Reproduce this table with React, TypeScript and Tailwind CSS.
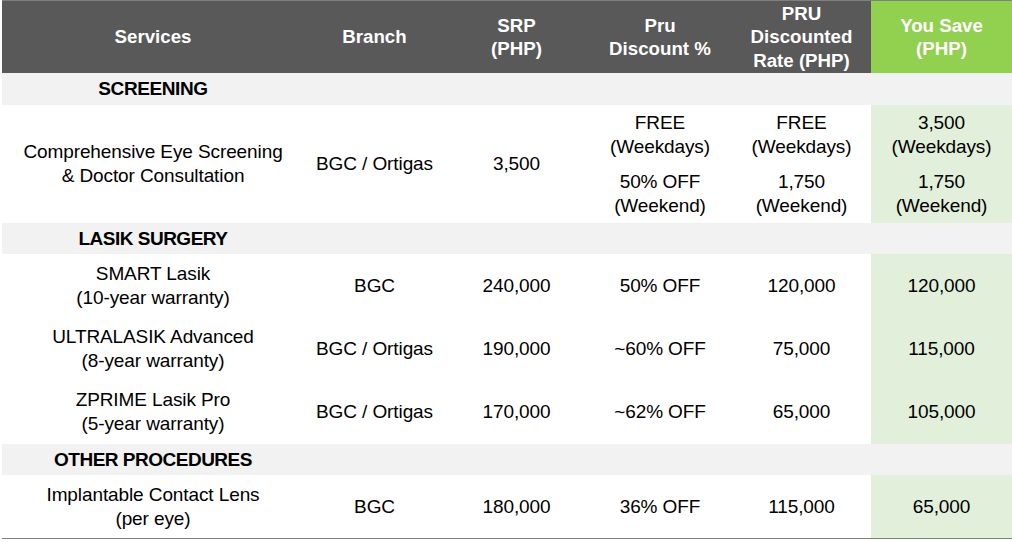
import React from "react";

const COLS = "grid grid-cols-[302px_141px_143px_144px_139px_141px]";

function Cell({ children, green = false }: { children?: React.ReactNode; green?: boolean }) {
  return (
    <div
      className={`flex flex-col items-center justify-center text-center ${green ? "bg-[#e2efda]" : ""}`}
    >
      {children}
    </div>
  );
}

function Category({ label }: { label: string }) {
  return (
    <div className={`${COLS} h-[31px] bg-[#f2f2f2]`}>
      <div className="flex items-center justify-center font-bold tracking-[-0.5px]">{label}</div>
    </div>
  );
}

function Two({ a, b }: { a: string; b: string }) {
  return (
    <>
      <div>{a}</div>
      <div>{b}</div>
    </>
  );
}

function DataRow({
  h,
  cells,
}: {
  h: string;
  cells: React.ReactNode[];
}) {
  return (
    <div className={`${COLS} ${h}`}>
      {cells.map((c, i) => (
        <Cell key={i} green={i === 5}>
          {c}
        </Cell>
      ))}
    </div>
  );
}

export default function App() {
  return (
    <div
      className="w-[1012px] h-[542px] bg-white text-black text-[19px] leading-[24px] tracking-[-0.1px]"
      style={{ fontFamily: '"Liberation Sans", Arial, sans-serif' }}
    >
      <div className="ml-[2px] w-[1010px] border-b border-[#7f7f7f]">
        {/* Header */}
        <div className={`${COLS} h-[73px] border-t border-[#7f7f7f] bg-[#595959] text-white font-bold leading-[23.5px] tracking-normal text-[18.7px]`}>
          <Cell>Services</Cell>
          <Cell>Branch</Cell>
          <Cell>
            <Two a="SRP" b="(PHP)" />
          </Cell>
          <Cell>
            <Two a="Pru" b="Discount %" />
          </Cell>
          <Cell>
            <div>PRU</div>
            <div>Discounted</div>
            <div>Rate (PHP)</div>
          </Cell>
          <div className="flex flex-col items-center justify-center text-center bg-[#92d050]">
            <div>You Save</div>
            <div>(PHP)</div>
          </div>
        </div>

        <div className={`${COLS} h-[32px] bg-[#f2f2f2]`}>
          <div className="flex items-center justify-center font-bold tracking-[-0.4px]">SCREENING</div>
        </div>

        <DataRow
          h="h-[118px]"
          cells={[
            <Two a="Comprehensive Eye Screening" b="& Doctor Consultation" />,
            "BGC / Ortigas",
            "3,500",
            <div className="flex flex-col gap-[11px]">
              <div><Two a="FREE" b="(Weekdays)" /></div>
              <div><Two a="50% OFF" b="(Weekend)" /></div>
            </div>,
            <div className="flex flex-col gap-[11px]">
              <div><Two a="FREE" b="(Weekdays)" /></div>
              <div><Two a="1,750" b="(Weekend)" /></div>
            </div>,
            <div className="flex flex-col gap-[11px]">
              <div><Two a="3,500" b="(Weekdays)" /></div>
              <div><Two a="1,750" b="(Weekend)" /></div>
            </div>,
          ]}
        />

        <Category label="LASIK SURGERY" />

        <DataRow
          h="h-[63px]"
          cells={[
            <Two a="SMART Lasik" b="(10-year warranty)" />,
            "BGC",
            "240,000",
            "50% OFF",
            "120,000",
            "120,000",
          ]}
        />
        <DataRow
          h="h-[63px]"
          cells={[
            <Two a="ULTRALASIK Advanced" b="(8-year warranty)" />,
            "BGC / Ortigas",
            "190,000",
            "~60% OFF",
            "75,000",
            "115,000",
          ]}
        />
        <DataRow
          h="h-[64px]"
          cells={[
            <Two a="ZPRIME Lasik Pro" b="(5-year warranty)" />,
            "BGC / Ortigas",
            "170,000",
            "~62% OFF",
            "65,000",
            "105,000",
          ]}
        />

        <Category label="OTHER PROCEDURES" />

        <DataRow
          h="h-[63px]"
          cells={[
            <Two a="Implantable Contact Lens" b="(per eye)" />,
            "BGC",
            "180,000",
            "36% OFF",
            "115,000",
            "65,000",
          ]}
        />
      </div>
    </div>
  );
}
